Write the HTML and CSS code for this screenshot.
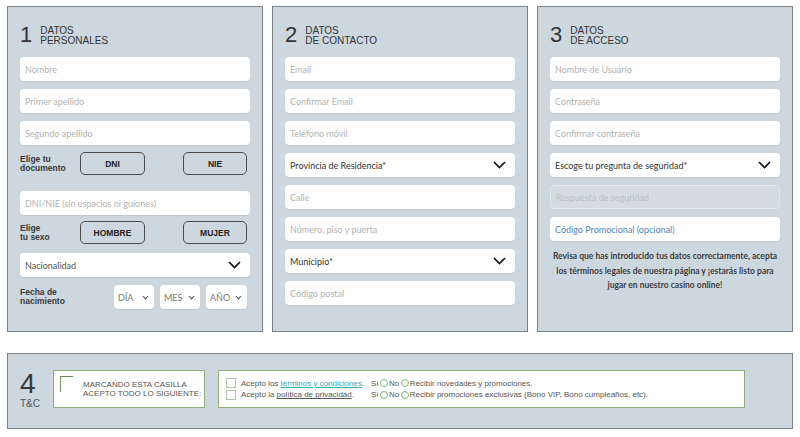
FILE: index.html
```html
<!DOCTYPE html>
<html lang="es">
<head>
    <meta charset="UTF-8">
    <meta name="viewport" content="width=device-width, initial-scale=1.0">
    <title>Registro</title>
    <link rel="stylesheet" href="styles.css">
</head>
<body>
    <div class="page">
        <div class="steps">
            <!-- Paso 1 -->
            <section class="panel">
                <div class="step-head">
                    <span class="step-num">1</span>
                    <span class="step-title">DATOS<br>PERSONALES</span>
                </div>
                <input class="field" type="text" placeholder="Nombre">
                <input class="field" type="text" placeholder="Primer apellido">
                <input class="field field-tight" type="text" placeholder="Segundo apellido">

                <div class="choice-row doc-row">
                    <span class="row-label">Elige tu<br>documento</span>
                    <button class="choice">DNI</button>
                    <button class="choice choice-right">NIE</button>
                </div>

                <input class="field field-dni" type="text" placeholder="DNI/NIE (sin espacios ni guiones)">

                <div class="choice-row sex-row">
                    <span class="row-label">Elige<br>tu sexo</span>
                    <button class="choice">HOMBRE</button>
                    <button class="choice choice-right">MUJER</button>
                </div>

                <div class="select select-plain">
                    <span>Nacionalidad</span>
                    <svg width="13" height="8" viewBox="0 0 13 8"><polyline points="1,1 6.5,6.5 12,1" fill="none" stroke="#111" stroke-width="1.7"/></svg>
                </div>

                <div class="date-row">
                    <span class="row-label">Fecha de<br>nacimiento</span>
                    <div class="mini-select">
                        <span>DÍA</span>
                        <svg width="7" height="5" viewBox="0 0 7 5"><polyline points="1,1 3.5,3.8 6,1" fill="none" stroke="#555" stroke-width="1.1"/></svg>
                    </div>
                    <div class="mini-select">
                        <span>MES</span>
                        <svg width="7" height="5" viewBox="0 0 7 5"><polyline points="1,1 3.5,3.8 6,1" fill="none" stroke="#555" stroke-width="1.1"/></svg>
                    </div>
                    <div class="mini-select">
                        <span>AÑO</span>
                        <svg width="7" height="5" viewBox="0 0 7 5"><polyline points="1,1 3.5,3.8 6,1" fill="none" stroke="#555" stroke-width="1.1"/></svg>
                    </div>
                </div>
            </section>

            <!-- Paso 2 -->
            <section class="panel">
                <div class="step-head">
                    <span class="step-num">2</span>
                    <span class="step-title">DATOS<br>DE CONTACTO</span>
                </div>
                <input class="field" type="text" placeholder="Email">
                <input class="field" type="text" placeholder="Confirmar Email">
                <input class="field" type="text" placeholder="Teléfono móvil">
                <div class="select">
                    <span>Provincia de Residencia*</span>
                    <svg width="13" height="8" viewBox="0 0 13 8"><polyline points="1,1 6.5,6.5 12,1" fill="none" stroke="#111" stroke-width="1.7"/></svg>
                </div>
                <input class="field" type="text" placeholder="Calle">
                <input class="field" type="text" placeholder="Número, piso y puerta">
                <div class="select">
                    <span>Municipio*</span>
                    <svg width="13" height="8" viewBox="0 0 13 8"><polyline points="1,1 6.5,6.5 12,1" fill="none" stroke="#111" stroke-width="1.7"/></svg>
                </div>
                <input class="field" type="text" placeholder="Código postal">
            </section>

            <!-- Paso 3 -->
            <section class="panel">
                <div class="step-head">
                    <span class="step-num">3</span>
                    <span class="step-title">DATOS<br>DE ACCESO</span>
                </div>
                <input class="field" type="text" placeholder="Nombre de Usuario">
                <input class="field" type="password" placeholder="Contraseña">
                <input class="field" type="password" placeholder="Confirmar contraseña">
                <div class="select">
                    <span>Escoge tu pregunta de seguridad*</span>
                    <svg width="13" height="8" viewBox="0 0 13 8"><polyline points="1,1 6.5,6.5 12,1" fill="none" stroke="#111" stroke-width="1.7"/></svg>
                </div>
                <input class="field field-disabled" type="text" placeholder="Respuesta de seguridad" disabled>
                <input class="field field-promo" type="text" placeholder="Código Promocional (opcional)">
                <p class="note">Revisa que has introducido tus datos correctamente, acepta los términos legales de nuestra página y ¡estarás listo para jugar en nuestro casino online!</p>
            </section>
        </div>

        <!-- Paso 4 -->
        <section class="panel-tc">
            <div class="tc-head">
                <span class="tc-num">4</span>
                <span class="tc-title">T&amp;C</span>
            </div>

            <label class="accept-all">
                <span class="big-check"></span>
                <span class="accept-text">MARCANDO ESTA CASILLA<br>ACEPTO TODO LO SIGUIENTE:</span>
            </label>

            <div class="tc-list">
                <div class="tc-row">
                    <span class="tc-left"><span class="check"></span>Acepto los&nbsp;<a href="#" class="link-teal">términos y condiciones</a>.</span>
                    <span class="tc-right">Sí<span class="radio"></span>No<span class="radio"></span>Recibir novedades y promociones.</span>
                </div>
                <div class="tc-row">
                    <span class="tc-left"><span class="check"></span>Acepto la&nbsp;<a href="#" class="link-gray">política de privacidad</a>.</span>
                    <span class="tc-right">Sí<span class="radio"></span>No<span class="radio"></span>Recibir promociones exclusivas (Bono VIP, Bono cumpleaños, etc).</span>
                </div>
            </div>
        </section>
    </div>
</body>
</html>
```

FILE: styles.css
```css
* {
    margin: 0;
    padding: 0;
    box-sizing: border-box;
}

body {
    background: #fff;
    color: #333;
    font-family: 'Liberation Sans', Arial, sans-serif;
}

.page {
    padding: 6px 0 0 7px;
}

.steps {
    display: flex;
    gap: 9px;
}

.panel {
    width: 256px;
    height: 326px;
    background: #cdd7df;
    border: 1px solid #7c8186;
    padding: 17px 12px 0;
}

.step-head {
    display: flex;
    gap: 8px;
    height: 22px;
    margin-bottom: 11px;
}

.step-num {
    font-size: 22px;
    line-height: 22px;
    color: #333;
}

.step-title {
    font-size: 10px;
    line-height: 10px;
    margin-top: 1.5px;
    color: #333;
}

/* campos */
.field {
    display: block;
    width: 100%;
    height: 24px;
    margin-bottom: 8px;
    padding: 0 5px;
    border: none;
    border-radius: 4px;
    background: #fff;
    box-shadow: 0 1px 1px rgba(0, 0, 0, 0.08);
    font-family: 'Lato', sans-serif;
    font-size: 9px;
    color: #444;
    outline: none;
}

.field::placeholder {
    color: #b3b3b3;
}

.field-tight {
    margin-bottom: 7px;
}

.field-dni {
    margin-bottom: 6px;
}

.field-disabled {
    background: #d4dce2;
    border: 1px solid #e4e9ec;
    box-shadow: none;
}

.field-disabled::placeholder {
    color: #b7c0c7;
}

.field-promo::placeholder {
    color: #4f86c0;
}

.select {
    display: flex;
    justify-content: space-between;
    align-items: center;
    height: 24px;
    margin-bottom: 8px;
    padding: 0 9px 0 5px;
    background: #fff;
    border-radius: 4px;
    box-shadow: 0 1px 1px rgba(0, 0, 0, 0.08);
    font-family: 'Lato', sans-serif;
    font-size: 9px;
    color: #333;
}

.select-plain {
    color: #555;
}

/* filas de elección */
.row-label {
    font-size: 8.5px;
    line-height: 9px;
    font-weight: bold;
    color: #3a3a3a;
}

.choice-row {
    display: flex;
    align-items: center;
    padding-right: 3px;
}

.choice-row .row-label {
    width: 60px;
}

.doc-row {
    height: 23px;
    margin-bottom: 16px;
}

.sex-row {
    height: 23px;
    margin-bottom: 9px;
}

.choice {
    width: 65px;
    height: 100%;
    background: transparent;
    border: 1px solid #4b4b4b;
    border-radius: 5px;
    font-family: 'Liberation Sans', Arial, sans-serif;
    font-size: 8.5px;
    font-weight: bold;
    color: #222;
}

.choice-right {
    width: 64px;
    margin-left: auto;
}

.date-row {
    display: flex;
    align-items: center;
    gap: 6px;
    padding-right: 3px;
}

.date-row .row-label {
    flex: 1;
}

.mini-select {
    display: flex;
    justify-content: space-between;
    align-items: center;
    width: 40px;
    height: 24px;
    padding: 0 5px 0 4px;
    background: #fff;
    border-radius: 4px;
    box-shadow: 0 1px 1px rgba(0, 0, 0, 0.08);
    font-family: 'Lato', sans-serif;
    font-size: 9px;
    color: #777;
}

.mini-select:last-child {
    width: 41px;
}

.note {
    margin-top: 7px;
    text-align: center;
    font-family: 'Lato', sans-serif;
    font-weight: bold;
    font-size: 8.5px;
    line-height: 14.5px;
    color: #3d3d3d;
}

/* T&C */
.panel-tc {
    display: flex;
    align-items: flex-start;
    width: 786px;
    height: 76px;
    margin-top: 21px;
    padding: 16px 12px 0;
    background: #cdd7df;
    border: 1px solid #7c8186;
}

.tc-head {
    display: flex;
    flex-direction: column;
    width: 33px;
}

.tc-num {
    font-size: 28px;
    line-height: 28px;
    color: #3a3a3a;
}

.tc-title {
    font-size: 10px;
    line-height: 12px;
    color: #555;
}

.accept-all {
    display: flex;
    align-items: flex-start;
    width: 152px;
    height: 38px;
    padding: 5px 0 0 6px;
    background: #fff;
    border: 1px solid #8fae78;
}

.big-check {
    width: 13px;
    height: 16px;
    border-top: 1px solid #6e8f56;
    border-left: 1px solid #6e8f56;
    margin-right: 10px;
}

.accept-text {
    margin-top: 4px;
    font-size: 8px;
    line-height: 9px;
    color: #555;
}

.tc-list {
    display: flex;
    flex-direction: column;
    justify-content: center;
    width: 527px;
    height: 38px;
    margin-left: 13px;
    padding-left: 7px;
    background: #fff;
    border: 1px solid #8fae78;
    font-size: 8px;
    color: #555;
}

.tc-row {
    display: flex;
    align-items: center;
    height: 11.5px;
}

.tc-left {
    display: flex;
    align-items: center;
    width: 145px;
}

.tc-right {
    display: flex;
    align-items: center;
}

.check {
    width: 10px;
    height: 10px;
    border: 1px solid #aac6a2;
    margin-right: 5px;
}

.radio {
    width: 8px;
    height: 8px;
    border: 1px solid #74c174;
    border-radius: 50%;
    margin: 0 1px 0 1.5px;
}

.link-teal {
    color: #33a7b4;
}

.link-gray {
    color: #555;
}
```
